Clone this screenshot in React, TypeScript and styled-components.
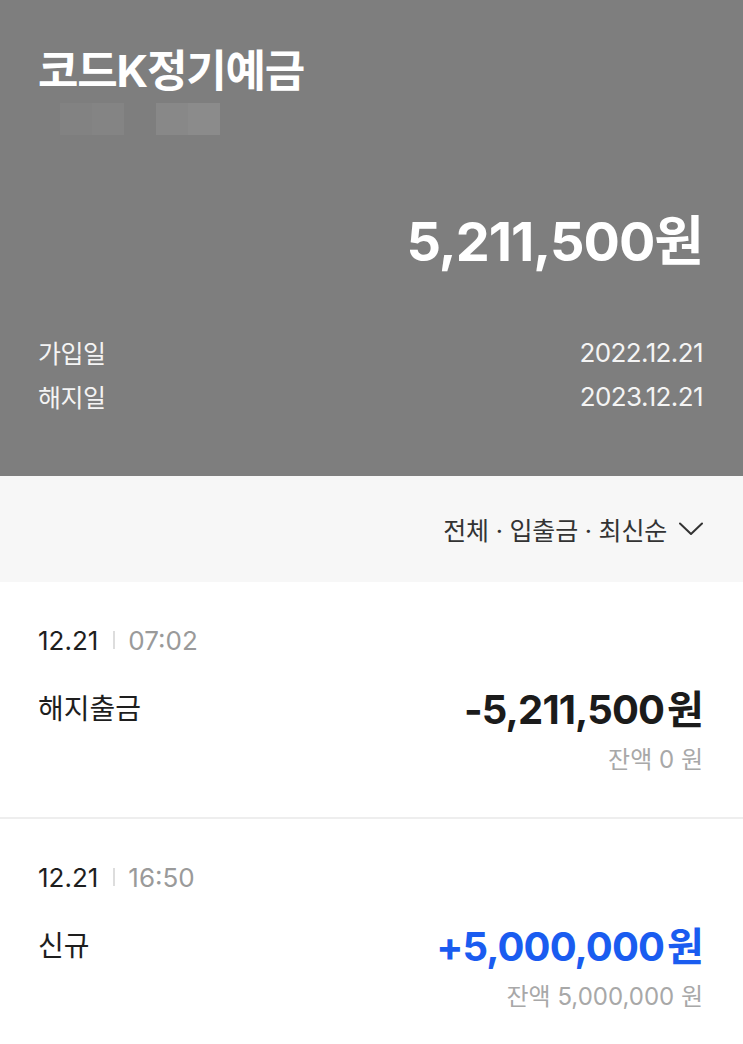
import React from "react";
import styled, { createGlobalStyle } from "styled-components";

//#region Styles
const GlobalStyle = createGlobalStyle`
  * {
    box-sizing: border-box;
  }
  body {
    margin: 0;
    background: #ffffff;
    font-family: Inter, "Noto Sans CJK KR", sans-serif;
    -webkit-font-smoothing: antialiased;
  }
`;

const Page = styled.div`
  width: 743px;
  min-height: 1044px;
  background: #ffffff;
  overflow: hidden;
`;

const Header = styled.header`
  background: #7e7e7e;
  padding: 43px 40px 58px 38px;
  color: #ffffff;
`;

const Title = styled.h1`
  margin: 0;
  font-size: 44px;
  line-height: 56px;
  font-weight: 700;
  letter-spacing: -1.2px;
`;

const MaskRow = styled.div`
  display: flex;
  gap: 32px;
  margin: 4px 0 0 22px;
  height: 32px;
`;

const MaskBlock = styled.div`
  display: flex;
`;

const MaskCell = styled.span<{ $shade: string }>`
  width: 32px;
  height: 32px;
  background: ${(p) => p.$shade};
`;

const Balance = styled.div`
  margin-top: 75px;
  text-align: right;
  font-size: 54px;
  line-height: 64px;
  font-weight: 700;
  letter-spacing: -1px;
`;

const InfoList = styled.dl`
  margin: 56px 0 0;
`;

const InfoRow = styled.div`
  display: flex;
  justify-content: space-between;
  align-items: center;
  height: 44px;
  color: #f4f4f4;
`;

const InfoLabel = styled.dt`
  margin: 0;
  font-size: 25px;
  letter-spacing: -0.5px;
`;

const InfoValue = styled.dd`
  margin: 0;
  font-size: 26px;
  letter-spacing: -0.6px;
`;

const FilterBar = styled.div`
  height: 106px;
  background: #f7f7f7;
  display: flex;
  justify-content: flex-end;
  align-items: center;
  padding: 0 40px;
`;

const FilterButton = styled.button`
  display: flex;
  align-items: center;
  gap: 12px;
  border: 0;
  background: transparent;
  padding: 0;
  font-family: inherit;
  font-size: 25px;
  letter-spacing: -0.2px;
  color: #333333;
  cursor: pointer;
`;

const TxList = styled.ul`
  margin: 0;
  padding: 0;
`;

const TxItem = styled.li`
  list-style: none;
  padding: 42px 40px 41px 38px;
  border-bottom: 2px solid #eeeeee;
`;

const DateRow = styled.div`
  display: flex;
  align-items: center;
  height: 32px;
  font-size: 26px;
`;

const DateText = styled.span`
  color: #1e1e1e;
`;

const Divider = styled.span`
  width: 2px;
  height: 18px;
  background: #dddddd;
  margin: 0 13px 0 15px;
`;

const TimeText = styled.span`
  color: #9a9a9a;
`;

const MainRow = styled.div`
  display: flex;
  justify-content: space-between;
  align-items: center;
  height: 48px;
  margin-top: 27px;
`;

const TxName = styled.span`
  font-size: 28px;
  color: #1e1e1e;
`;

const TxAmount = styled.span<{ $color: string }>`
  font-size: 40px;
  font-weight: 700;
  letter-spacing: -0.9px;
  color: ${(p) => p.$color};
`;

const Won = styled.span`
  margin-left: 3px;
`;

const TxBalance = styled.div`
  margin-top: 13px;
  text-align: right;
  font-size: 24px;
  line-height: 32px;
  color: #a8a8a8;
`;
//#endregion

type Tx = {
  id: number;
  date: string;
  time: string;
  name: string;
  amount: string;
  positive: boolean;
  balance: string;
};

const TXS: Tx[] = [
  {
    id: 1,
    date: "12.21",
    time: "07:02",
    name: "해지출금",
    amount: "-5,211,500",
    positive: false,
    balance: "잔액 0 원",
  },
  {
    id: 2,
    date: "12.21",
    time: "16:50",
    name: "신규",
    amount: "+5,000,000",
    positive: true,
    balance: "잔액 5,000,000 원",
  },
];

const Chevron = () => (
  <svg width="24" height="14" viewBox="0 0 24 14" fill="none">
    <polyline
      points="1,1.5 12,12 23,1.5"
      stroke="#333333"
      strokeWidth="2"
      strokeLinecap="round"
      strokeLinejoin="round"
    />
  </svg>
);

const TxRow = ({ tx }: { tx: Tx }) => (
  <TxItem>
    <DateRow>
      <DateText>{tx.date}</DateText>
      <Divider />
      <TimeText>{tx.time}</TimeText>
    </DateRow>
    <MainRow>
      <TxName>{tx.name}</TxName>
      <TxAmount $color={tx.positive ? "#1a5cf0" : "#1b1b1b"}>
        {tx.amount}
        <Won>원</Won>
      </TxAmount>
    </MainRow>
    <TxBalance>{tx.balance}</TxBalance>
  </TxItem>
);

export default function App() {
  return (
    <Page>
      <GlobalStyle />
      <Header>
        <Title>코드K정기예금</Title>
        <MaskRow>
          <MaskBlock>
            <MaskCell $shade="#828282" />
            <MaskCell $shade="#848484" />
          </MaskBlock>
          <MaskBlock>
            <MaskCell $shade="#888888" />
            <MaskCell $shade="#8b8b8b" />
          </MaskBlock>
        </MaskRow>
        <Balance>5,211,500원</Balance>
        <InfoList>
          <InfoRow>
            <InfoLabel>가입일</InfoLabel>
            <InfoValue>2022.12.21</InfoValue>
          </InfoRow>
          <InfoRow>
            <InfoLabel>해지일</InfoLabel>
            <InfoValue>2023.12.21</InfoValue>
          </InfoRow>
        </InfoList>
      </Header>
      <FilterBar>
        <FilterButton type="button">
          <span>전체 · 입출금 · 최신순</span>
          <Chevron />
        </FilterButton>
      </FilterBar>
      <TxList>
        {TXS.map((tx) => (
          <TxRow key={tx.id} tx={tx} />
        ))}
      </TxList>
    </Page>
  );
}
